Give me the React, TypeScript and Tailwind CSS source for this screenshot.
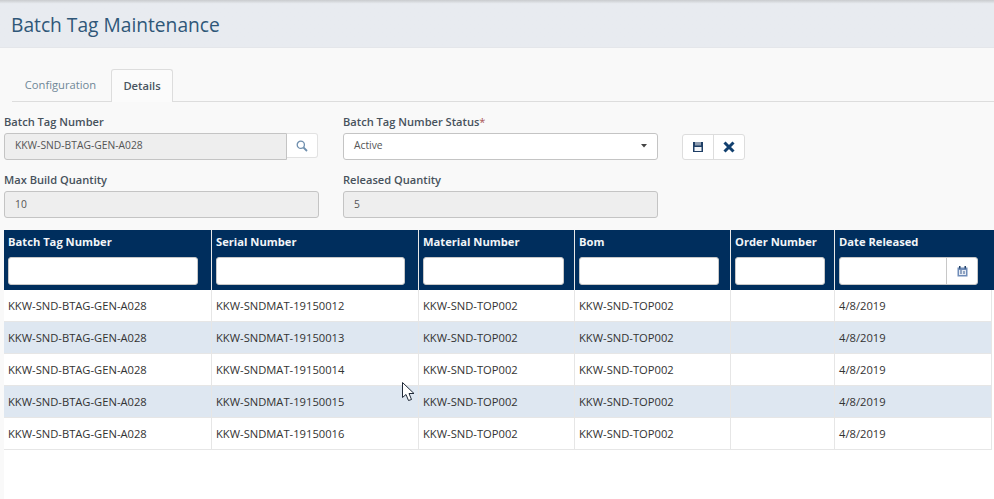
const rows = [
  "KKW-SNDMAT-19150012",
  "KKW-SNDMAT-19150013",
  "KKW-SNDMAT-19150014",
  "KKW-SNDMAT-19150015",
  "KKW-SNDMAT-19150016",
];

const columns = [
  { label: "Batch Tag Number", width: "w-[208px]", input: "w-[190px]" },
  { label: "Serial Number", width: "w-[207px]", input: "w-[189px]" },
  { label: "Material Number", width: "w-[156px]", input: "w-[141px]" },
  { label: "Bom", width: "w-[156px]", input: "w-[140px]" },
  { label: "Order Number", width: "w-[104px]", input: "w-[90px]" },
];

function Field({ label, value }: { label: string; value: string }) {
  return (
    <div>
      <div className="h-[18px] text-[11.1px] leading-[18px] font-semibold text-[#47525c]">{label}</div>
      <div className="mt-[2px] flex h-[27px] items-center rounded-[3px] border border-[#c4c4c4] bg-[#eeeeee] pl-[10px] text-[10.3px] text-[#555]">
        {value}
      </div>
    </div>
  );
}

export default function App() {
  return (
    <div className="flex h-[499px] w-[994px] flex-col overflow-hidden bg-[#f9f9f9] font-['Open_Sans',sans-serif]">
      <div className="flex h-[48px] items-center border-b border-[#e4e6ea] bg-gradient-to-b from-[#c9cbce] from-0% via-[#e8ebf0] via-[8%] to-[#e8ebf0] pl-[11px] pt-[3px] text-[19.2px] text-[#2f5778]">
        Batch Tag Maintenance
      </div>

      <div className="ml-[12px] mt-[21px] flex h-[33px] border-b border-[#dddddd] text-[11.2px]">
        <div className="flex w-[97px] items-center justify-center text-[#6f8797]">Configuration</div>
        <div className="ml-[2px] flex h-[33px] w-[62px] items-center justify-center rounded-t-[3px] border border-b-0 border-[#dddddd] bg-[#fbfbfb] font-semibold text-[#4a5560]">
          Details
        </div>
      </div>

      <div className="mt-[11px] flex pl-[4px]">
        <div className="flex w-[315px] flex-col gap-[11px]">
          <div>
            <div className="h-[18px] text-[11.1px] leading-[18px] font-semibold text-[#47525c]">Batch Tag Number</div>
            <div className="mt-[2px] flex h-[27px]">
              <div className="flex w-[283px] items-center rounded-l-[3px] border border-[#c4c4c4] bg-[#eeeeee] pb-[1px] pl-[10px] text-[10.3px] text-[#555]">
                KKW-SND-BTAG-GEN-A028
              </div>
              <div className="flex h-[25px] w-[31px] items-center justify-center rounded-r-[3px] border border-l-0 border-[#e2e2e2] bg-white">
                <svg width="12" height="12" viewBox="0 0 12 12" fill="none" stroke="#6f8fae" strokeWidth="1.3">
                  <circle cx="4.8" cy="4.8" r="3.6" />
                  <path d="M7.5 7.5 11 11" strokeWidth="1.8" />
                </svg>
              </div>
            </div>
          </div>
          <Field label="Max Build Quantity" value="10" />
        </div>

        <div className="ml-[24px] flex w-[315px] flex-col gap-[11px]">
          <div>
            <div className="h-[18px] text-[11.1px] leading-[18px] font-semibold text-[#47525c]">
              Batch Tag Number Status<span className="font-normal text-[#a55]">*</span>
            </div>
            <div className="mt-[2px] flex h-[27px] items-center justify-between rounded-[3px] border border-[#c4c4c4] bg-white pb-[1px] pl-[10px] pr-[10px] text-[10.3px] text-[#555]">
              Active
              <svg width="6" height="4" viewBox="0 0 6 4" fill="#444">
                <path d="M0 0h6L3 3.500z" />
              </svg>
            </div>
          </div>
          <Field label="Released Quantity" value="5" />
        </div>

        <div className="ml-[24px] mt-[21px] flex h-[26px] w-[63px] rounded-[3px] border border-[#dddddd] bg-white">
          <div className="flex w-[31px] items-center justify-center border-r border-[#dddddd]">
            <svg width="12" height="12" viewBox="0 0 12 12">
              <path d="M1 1h10v10H1z" fill="#1f3f66" />
              <rect x="3" y="1" width="6" height="3.500" fill="#8f9db0" />
              <rect x="2.500" y="6" width="7" height="4" fill="#f4f6f9" />
            </svg>
          </div>
          <div className="flex flex-1 items-center justify-center">
            <svg width="12" height="12" viewBox="0 0 12 12" stroke="#12406f" strokeWidth="3">
              <path d="M1.500 1.500 10.500 10.500M10.500 1.500 1.500 10.500" />
            </svg>
          </div>
        </div>
      </div>

      <div className="relative ml-[4px] mt-[12px] flex-1 bg-white">
        <div className="flex h-[60px] bg-[#002e5d]">
          {columns.map((c) => (
            <div key={c.label} className={`${c.width} shrink-0 border-r-[1px] border-[#e8e8e8] px-[4px]`}>
              <div className="mt-[3px] h-[18px] text-[11.2px] leading-[18px] font-bold whitespace-nowrap text-[#f2f5f8]">{c.label}</div>
              <div className={`${c.input} mt-[6px] h-[28px] rounded-[3px] border border-[#c8c8c8] bg-white`} />
            </div>
          ))}
          <div className="flex-1 pl-[4px]">
            <div className="mt-[3px] h-[18px] text-[11.2px] leading-[18px] font-bold text-[#f2f5f8]">Date Released</div>
            <div className="mt-[6px] flex h-[28px] w-[139px] rounded-[3px] border border-[#c8c8c8] bg-white">
              <div className="flex-1 border-r border-[#c8c8c8]" />
              <div className="flex w-[30px] items-center justify-center">
                <svg width="11" height="11" viewBox="0 0 11 11">
                  <rect x="0.5" y="1.500" width="10" height="9" fill="#6f8cb8" />
                  <rect x="2" y="0" width="1.500" height="2.500" fill="#1f3f66" />
                  <rect x="7.500" y="0" width="1.500" height="2.500" fill="#1f3f66" />
                  <rect x="2" y="4" width="7" height="5" fill="#e6ebf3" />
                  <path d="M3 5h2M3 7h2M7 5v3" stroke="#3d5f8f" strokeWidth="1" />
                </svg>
              </div>
            </div>
          </div>
        </div>

        <div className="w-[988px]">
          {rows.map((serial, i) => (
            <div
              key={serial}
              className={`flex h-[32px] items-center border-b border-[#e6e6e6] text-[11.2px] text-[#333] ${
                i % 2 === 1 ? "bg-[#dee7f1]" : "bg-white"
              }`}
            >
              <div className="flex h-full w-[208px] shrink-0 items-center border-r border-[#e6e6e6] pl-[4px] pt-[2px]">KKW-SND-BTAG-GEN-A028</div>
              <div className="flex h-full w-[207px] shrink-0 items-center border-r border-[#e6e6e6] pl-[4px] pt-[2px]">{serial}</div>
              <div className="flex h-full w-[156px] shrink-0 items-center border-r border-[#e6e6e6] pl-[4px] pt-[2px]">KKW-SND-TOP002</div>
              <div className="flex h-full w-[156px] shrink-0 items-center border-r border-[#e6e6e6] pl-[4px] pt-[2px]">KKW-SND-TOP002</div>
              <div className="h-full w-[104px] shrink-0 border-r border-[#e6e6e6]" />
              <div className="flex h-full w-[157px] shrink-0 items-center border-r border-[#e6e6e6] pl-[4px] pt-[2px]">4/8/2019</div>
            </div>
          ))}
        </div>

        {/* mouse pointer caught in the screenshot */}
        <svg className="absolute left-[398px] top-[152px]" width="13" height="20" viewBox="0 0 13 20" fill="#fff" stroke="#1f2937" strokeWidth="1">
          <path d="M.5.5v15L4 12.500l2.500 6 3-1L7 11.500h5z" />
        </svg>
      </div>
    </div>
  );
}
